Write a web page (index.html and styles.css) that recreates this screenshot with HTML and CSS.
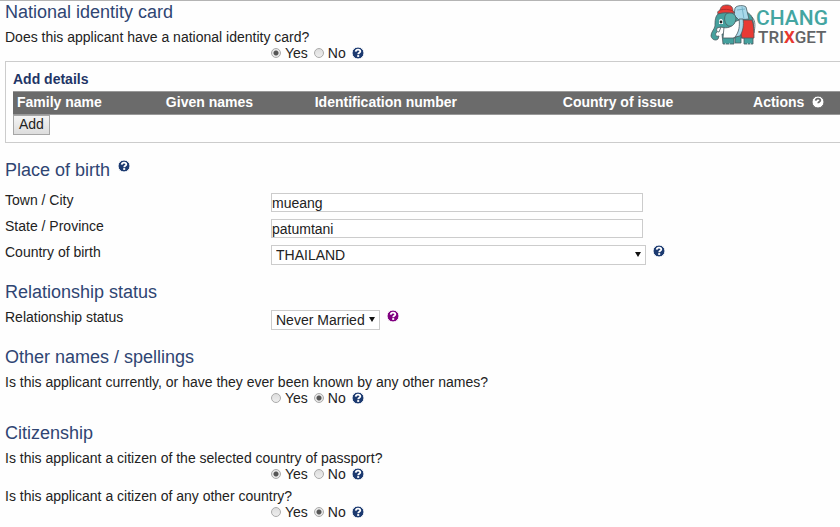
FILE: index.html
```html
<!DOCTYPE html>
<html lang="en">
<head>
  <meta charset="UTF-8" />
  <meta name="viewport" content="width=device-width, initial-scale=1" />
  <title>Applicant details</title>
  <link rel="stylesheet" href="styles.css">
</head>
<body>

  <!-- help icon, reused below -->
  <svg class="sprite" aria-hidden="true">
    <symbol id="help" viewBox="0 0 12 12">
      <circle cx="6" cy="6" r="6" fill="currentColor" />
      <path class="mark" d="M3.700 4.600C3.900 3.200 4.900 2.700 6 2.700c1.300 0 2.300.7 2.300 1.800C8.300 5.900 6.200 5.700 6.200 7.300" fill="none" stroke-width="1.800" />
      <rect class="dot" x="5.200" y="8.100" width="2" height="1.800" />
    </symbol>
  </svg>

  <!-- LOGO -->
  <a href="#" class="logo" aria-label="Chang Trixget">
    <svg class="logo-elephant" viewBox="4 4 46 42" aria-hidden="true">
      <g stroke="#4a5a60" stroke-width=".8" stroke-linejoin="round">
        <path d="M28 14C34 9 43 11 46 17c2 5 2 12 1 21H28z" fill="#45a09d" />
        <path d="M46 17c4 4 3 10 2 16" fill="none" />
        <path d="M16 34h12v10H17zM29 35h6v8h-6zM38 36h9v8h-9z" fill="#45a09d" />
        <path d="M18 27l6-3 9-4 3 6-3 10-6 2H17z" fill="#fff" />
        <path d="M36 20h10c2 5 2 11 2 18H36l-2-8z" fill="#e83a34" />
        <path d="M29 8c2-3 9-3 11-1l3 12-10 1-5-5z" fill="#a9d9ea" />
        <path d="M33 19h4c1 6 0 12-3 17l-5 1c4-5 5-11 4-18z" fill="#a9d9ea" />
        <path d="M31 10l8-1M36 7l2 12" fill="none" stroke="#6ba9c0" />
        <path d="M13 13c-4 3-4 8-4 13-1 4-4 6-4 10 1 4 5 5 7 3l1-3c-3 1-4-1-3-3l5-6c6 2 11 0 13-4 3-5 1-10-4-11z" fill="#45a09d" />
        <path d="M20 14c5-3 10 0 10 5-1 6-5 9-9 6-3-3-3-8-1-11z" fill="#57b0ac" />
        <path d="M11 28c-1 3 0 4 2 4l2-5z" fill="#fff" />
        <path d="M14 10c1-4 3-5 7-5s6 2 6 6l2 2c-6 0-12-1-17 1-1-2 0-3 2-4z" fill="#e83a34" />
        <path d="M14 10c4-1 9-1 13 1" fill="none" stroke="#a72626" />
      </g>
      <path d="M13 21c0-2 3-3 4 0v3h-4z" fill="#fff" />
      <circle cx="15" cy="22" r="1.400" fill="#222" />
      <path d="M19 44h1M23 44h1M41 44h1M44 44h1" stroke="#fff" />
    </svg>
    <span class="logo-text">
      <span class="logo-top">CHANG</span>
      <span class="logo-bottom">TRI<b>X</b>GET</span>
    </span>
  </a>

  <form class="page">

    <section>
      <h2>National identity card</h2>
      <fieldset class="question">
        <legend>Does this applicant have a national identity card?</legend>
        <div class="choices">
          <input type="radio" id="card-yes" name="card" checked>
          <label for="card-yes">Yes</label>
          <input type="radio" id="card-no" name="card">
          <label for="card-no">No</label>
          <a href="#" class="help" aria-label="Help"><svg><use href="#help" /></svg></a>
        </div>
      </fieldset>

      <div class="details">
        <h3>Add details</h3>
        <table>
          <thead>
            <tr>
              <th class="col-family">Family name</th>
              <th class="col-given">Given names</th>
              <th class="col-number">Identification number</th>
              <th class="col-country">Country of issue</th>
              <th>Actions <a href="#" class="help help-white" aria-label="Help"><svg><use href="#help" /></svg></a></th>
            </tr>
          </thead>
        </table>
        <button type="button" class="add">Add</button>
      </div>
    </section>

    <section>
      <h2 class="with-help">Place of birth <a href="#" class="help" aria-label="Help"><svg><use href="#help" /></svg></a></h2>
      <div class="fields">
        <div class="field">
          <label for="town">Town / City</label>
          <div class="control"><input type="text" id="town" value="mueang"></div>
        </div>
        <div class="field">
          <label for="state">State / Province</label>
          <div class="control"><input type="text" id="state" value="patumtani"></div>
        </div>
        <div class="field">
          <label for="country">Country of birth</label>
          <div class="control">
            <span class="select select-wide">
              <select id="country"><option>THAILAND</option></select>
            </span>
            <a href="#" class="help" aria-label="Help"><svg><use href="#help" /></svg></a>
          </div>
        </div>
      </div>
    </section>

    <section>
      <h2>Relationship status</h2>
      <div class="field">
        <label for="relationship">Relationship status</label>
        <div class="control">
          <span class="select">
            <select id="relationship"><option>Never Married</option></select>
          </span>
          <a href="#" class="help help-visited" aria-label="Help"><svg><use href="#help" /></svg></a>
        </div>
      </div>
    </section>

    <section>
      <h2>Other names / spellings</h2>
      <fieldset class="question">
        <legend>Is this applicant currently, or have they ever been known by any other names?</legend>
        <div class="choices">
          <input type="radio" id="names-yes" name="names">
          <label for="names-yes">Yes</label>
          <input type="radio" id="names-no" name="names" checked>
          <label for="names-no">No</label>
          <a href="#" class="help" aria-label="Help"><svg><use href="#help" /></svg></a>
        </div>
      </fieldset>
    </section>

    <section>
      <h2>Citizenship</h2>
      <fieldset class="question">
        <legend>Is this applicant a citizen of the selected country of passport?</legend>
        <div class="choices">
          <input type="radio" id="citizen-yes" name="citizen" checked>
          <label for="citizen-yes">Yes</label>
          <input type="radio" id="citizen-no" name="citizen">
          <label for="citizen-no">No</label>
          <a href="#" class="help" aria-label="Help"><svg><use href="#help" /></svg></a>
        </div>
      </fieldset>
      <fieldset class="question">
        <legend>Is this applicant a citizen of any other country?</legend>
        <div class="choices">
          <input type="radio" id="other-yes" name="other">
          <label for="other-yes">Yes</label>
          <input type="radio" id="other-no" name="other" checked>
          <label for="other-no">No</label>
          <a href="#" class="help" aria-label="Help"><svg><use href="#help" /></svg></a>
        </div>
      </fieldset>
    </section>

  </form>

</body>
</html>
```
FILE: styles.css
```css
/* RESET */
* {
  margin: 0;
  padding: 0;
  box-sizing: border-box;
}

body {
  background: #fefefe;
  border-top: 1px solid #b4b4b4;
  font-family: "Liberation Sans", Arial, sans-serif;
  font-size: 14px;
  line-height: 16px;
  color: #222;
  overflow-x: hidden;
}

.sprite {
  position: absolute;
  width: 0;
  height: 0;
}

/* LOGO */
.logo {
  position: absolute;
  top: 4px;
  right: 12px;
  display: flex;
  text-decoration: none;
}

.logo-elephant {
  width: 46px;
  height: 42px;
}

.logo-text {
  display: flex;
  flex-direction: column;
  padding-top: 5px;
  font-family: Roboto, sans-serif;
  font-weight: 500;
}

.logo-top {
  font-size: 21px;
  line-height: 19px;
  color: #43a5a1;
}

.logo-bottom {
  padding-left: 2px;
  font-size: 17px;
  line-height: 19px;
  color: #626466;
}

.logo-bottom b {
  color: #e8372f;
}

/* FORM */
.page {
  padding: 1px 0 6px 5px;
}

section {
  margin-bottom: 17px;
}

h2 {
  margin-bottom: 7px;
  font-size: 18px;
  font-weight: normal;
  line-height: 20px;
  color: #2f4573;
}

h2.with-help {
  display: flex;
  gap: 8px;
  margin-bottom: 12px;
}

h3 {
  margin-bottom: 4px;
  font-size: 14px;
  line-height: 16px;
  color: #1f3566;
}

.help {
  display: inline-flex;
  width: 12px;
  height: 12px;
  color: #1c3a70;
  stroke: #fff;
}

.help svg {
  width: 12px;
  height: 12px;
}

.mark {
  stroke: inherit;
}

.dot {
  fill: #fff;
  stroke: none;
}

.help-visited {
  color: #800080;
}

.help-white {
  margin-left: 4px;
  color: #fff;
  stroke: #6b6b6b;
  vertical-align: -1px;
}

.help-white .dot {
  fill: #6b6b6b;
}

/* QUESTIONS */
.question {
  border: none;
}

.question + .question {
  margin-top: 6px;
}

.choices {
  display: flex;
  align-items: center;
  height: 16px;
  padding-left: 266px;
}

.choices label {
  margin: 0 6px 0 4px;
}

.choices input {
  appearance: none;
  width: 10px;
  height: 10px;
  border: 1px solid #aaa;
  border-radius: 50%;
  background: linear-gradient(#ddd, #eee);
}

.choices input:checked {
  background: radial-gradient(circle, #555 0 2px, #e8e8e8 3px);
}

/* DETAILS TABLE */
.details {
  padding: 9px 0 7px 7px;
  border: 1px solid #ccc;
  border-right: none;
}

table {
  width: 100%;
  table-layout: fixed;
  border-collapse: collapse;
}

th {
  height: 23px;
  padding: 0 4px 2px;
  background: #6b6b6b;
  border-top: 1px solid #999;
  border-bottom: 1px solid #999;
  color: #fff;
  text-align: left;
  white-space: nowrap;
}

.col-family,
.col-given {
  width: 18%;
}

.col-number {
  width: 30%;
}

.col-country {
  width: 23%;
}

.add {
  display: block;
  height: 20px;
  padding: 0 5px 2px;
  background: linear-gradient(#f4f4f4, #ddd);
  border: 1px solid #a6a6a6;
  font: inherit;
  color: #222;
}

/* FIELDS */
.fields {
  display: grid;
  gap: 6px;
}

.field {
  display: grid;
  grid-template-columns: 266px 1fr;
}

.control {
  display: flex;
  align-items: flex-start;
  gap: 7px;
  padding-top: 1px;
}

.control input,
.control select {
  width: 100%;
  height: 19px;
  background: #fff;
  border: 1px solid #ccc;
  font: inherit;
  color: #222;
}

.control input {
  max-width: 372px;
}

.select {
  position: relative;
}

.select-wide {
  flex: 0 1 375px;
}

.control select {
  appearance: none;
  height: 20px;
  padding: 0 14px 0 4px;
}

.select::after {
  content: "";
  position: absolute;
  top: 7px;
  right: 5px;
  border: 3px solid transparent;
  border-top: 5px solid #111;
  border-bottom: none;
  pointer-events: none;
}
```
